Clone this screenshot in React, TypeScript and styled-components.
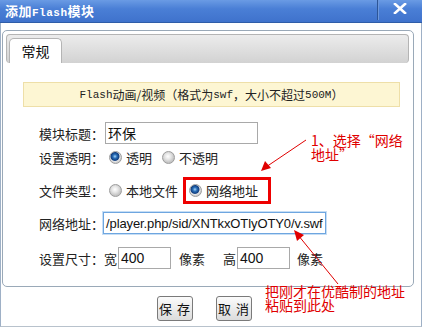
import styled, { createGlobalStyle } from "styled-components";

const GlobalStyle = createGlobalStyle`
  body {
    margin: 0;
    font-family: "Noto Sans CJK SC", "Liberation Sans", sans-serif;
    background: #fff;
  }
`;

const Window = styled.div`
  position: relative;
  width: 422px;
  height: 327px;
  box-sizing: border-box;
  display: flex;
  flex-direction: column;
  overflow: hidden;
  background: #fff;
`;

const TitleBar = styled.div`
  height: 23px;
  box-sizing: border-box;
  display: flex;
  align-items: flex-start;
  justify-content: space-between;
  background: linear-gradient(#6a9be4, #4a7fd6 40%, #3f72cc);
  border-bottom: 1px solid #2f5da8;
`;

const TitleText = styled.div`
  padding: 3px 0 0 5px;
  color: #fff;
  font-weight: bold;
  font-size: 13px;
  line-height: 16px;
  letter-spacing: 0.5px;
`;

const TitleLatin = styled.span`
  font-family: "Liberation Mono", monospace;
  font-size: 11px;
`;

const CloseArea = styled.div`
  width: 44px;
  height: 17px;
  display: flex;
  justify-content: center;
  padding-top: 3px;
  border-left: 1px solid #2d5596;
  box-shadow: inset 1px 0 0 #6d98dc;
`;

const Body = styled.div`
  flex: 1;
  display: flex;
  flex-direction: column;
  border-left: 1px solid #9eb0c6;
  border-right: 1px solid #9eb0c6;
  border-bottom: 1px solid #b8c2cc;
  padding: 7px 7px 0 1px;
`;

const Panel = styled.div`
  height: 257px;
  box-sizing: border-box;
  border: 1px solid #9aa9b8;
  border-radius: 5px;
  padding: 3px 3px 0 3px;
`;

const TabStrip = styled.div`
  height: 29px;
  box-sizing: border-box;
  display: flex;
  align-items: flex-end;
  padding-left: 2px;
  border: 1px solid #b4b4b4;
  border-bottom: none;
  border-radius: 4px;
  background: linear-gradient(#ececec, #d2d2d2);
  width: 403px;
`;

const Tab = styled.div`
  width: 53px;
  height: 25px;
  box-sizing: border-box;
  background: #fff;
  border: 1px solid #b4b4b4;
  border-bottom: none;
  border-radius: 5px 5px 0 0;
  font-size: 14px;
  color: #111;
  display: flex;
  align-items: center;
  justify-content: center;
`;

const Notice = styled.div`
  margin: 19px 0 0 17px;
  width: 377px;
  height: 25px;
  box-sizing: border-box;
  background: #fdf6d3;
  border: 1px solid #eedfa8;
  display: flex;
  align-items: center;
  justify-content: center;
  font-size: 12px;
  color: #222;
`;

const Mono = styled.span`
  font-family: "Liberation Mono", monospace;
  font-size: 11px;
`;

const Row = styled.div<{ $top: number; $h: number }>`
  display: flex;
  align-items: center;
  margin-top: ${(p) => p.$top}px;
  height: ${(p) => p.$h}px;
  font-size: 13px;
  color: #222;
`;

const Label = styled.div`
  width: 98px;
  text-align: right;
  white-space: nowrap;
`;

const TextInput = styled.div<{ $w: number; $focus?: boolean }>`
  width: ${(p) => p.$w}px;
  height: 22px;
  box-sizing: border-box;
  margin-left: ${(p) => (p.$focus ? -1 : 1)}px;
  border: 1px solid ${(p) => (p.$focus ? "#6ea6e0" : "#a9a9a9")};
  box-shadow: ${(p) => (p.$focus ? "0 0 0 1px #c6def5" : "none")};
  padding: 0 2px;
  display: flex;
  align-items: center;
  overflow: hidden;
  white-space: nowrap;
  font-size: 14px;
  color: #111;
`;

const UrlText = styled.span`
  font-family: "Liberation Sans", Arial, sans-serif;
  font-size: 13px;
  letter-spacing: -0.1px;
`;

const Caret = styled.span`
  display: inline-block;
  width: 1px;
  height: 15px;
  background: #000;
  margin-left: 1px;
`;

const NumText = styled.span`
  font-family: "Liberation Sans", Arial, sans-serif;
  font-size: 14px;
`;

const Option = styled.div<{ $boxed?: boolean; $ml: number }>`
  display: flex;
  align-items: center;
  gap: 4px;
  margin-left: ${(p) => p.$ml}px;
  ${(p) =>
    p.$boxed &&
    `
    border: 3px solid #ee0000;
    height: 27px;
    box-sizing: border-box;
    padding: 0 10px 0 3px;
  `}
`;

const Radio = styled.span<{ $on?: boolean }>`
  width: 13px;
  height: 13px;
  box-sizing: border-box;
  border-radius: 50%;
  border: 1px solid #9c9c9c;
  background: ${(p) =>
    p.$on
      ? "radial-gradient(circle at 45% 40%, #a8d6fa 0, #2a6fb8 2px, #123f80 4px, #e8e8e8 5px, #cfcfcf 6px)"
      : "radial-gradient(circle at 45% 40%, #ffffff 0, #e6e6e6 3px, #c4c4c4 6px)"};
`;

const Unit = styled.span<{ $ml: number }>`
  margin-left: ${(p) => p.$ml}px;
`;

const ButtonBar = styled.div`
  display: flex;
  justify-content: center;
  gap: 23px;
  padding: 9px 7px 0 0;
`;

const Button = styled.button`
  width: 36px;
  height: 25px;
  padding: 0;
  border: 1px solid #7a7a7a;
  border-radius: 3px;
  background: linear-gradient(#fbfbfb, #dcdcdc);
  font-family: "Noto Sans CJK SC", sans-serif;
  font-size: 13px;
  letter-spacing: 1px;
  color: #111;
  white-space: nowrap;
`;

const Note = styled.div<{ $x: number; $y: number }>`
  position: absolute;
  left: ${(p) => p.$x}px;
  top: ${(p) => p.$y}px;
  color: #e00000;
  font-size: 14px;
  line-height: 14px;
  white-space: nowrap;
`;

const Arrows = styled.svg`
  position: absolute;
  left: 0;
  top: 0;
  pointer-events: none;
`;

const App: React.FC = () => {
  return (
    <>
      <GlobalStyle />
      <Window>
        <TitleBar>
          <TitleText>
            添加<TitleLatin>Flash</TitleLatin>模块
          </TitleText>
          <CloseArea>
            <svg width="14" height="11" viewBox="0 0 14 11">
              <path
                d="M2 1 L12 10 M12 1 L2 10"
                stroke="#fff"
                strokeWidth="2.6"
                strokeLinecap="square"
              />
            </svg>
          </CloseArea>
        </TitleBar>
        <Body>
          <Panel>
            <TabStrip>
              <Tab>常规</Tab>
            </TabStrip>
            <Notice>
              <Mono>Flash</Mono>动画/视频（格式为<Mono>swf</Mono>，大小不超过
              <Mono>500M</Mono>）
            </Notice>
            <Row $top={15} $h={22}>
              <Label>模块标题：</Label>
              <TextInput $w={153}>环保</TextInput>
            </Row>
            <Row $top={2} $h={22}>
              <Label>设置透明：</Label>
              <Option $ml={5}>
                <Radio $on />
                透明
              </Option>
              <Option $ml={10}>
                <Radio />
                不透明
              </Option>
            </Row>
            <Row $top={9} $h={27}>
              <Label>文件类型：</Label>
              <Option $ml={5}>
                <Radio />
                本地文件
              </Option>
              <Option $ml={5} $boxed>
                <Radio $on />
                网络地址
              </Option>
            </Row>
            <Row $top={8} $h={22}>
              <Label>网络地址：</Label>
              <TextInput $w={223} $focus>
                <UrlText>/player.php/sid/XNTkxOTlyOTY0/v.swf</UrlText>
                <Caret />
              </TextInput>
            </Row>
            <Row $top={13} $h={22}>
              <Label>设置尺寸：</Label>
              <span>宽</span>
              <TextInput $w={53}>
                <NumText>400</NumText>
              </TextInput>
              <Unit $ml={8}>像素</Unit>
              <Unit $ml={18}>高</Unit>
              <TextInput $w={53}>
                <NumText>400</NumText>
              </TextInput>
              <Unit $ml={7}>像素</Unit>
            </Row>
          </Panel>
          <ButtonBar>
            <Button>保 存</Button>
            <Button>取 消</Button>
          </ButtonBar>
        </Body>

        <Note $x={311} $y={133}>
          1、选择“网络
          <br />
          地址”
        </Note>
        <Note $x={265} $y={284}>
          把刚才在优酷制的地址
          <br />
          粘贴到此处
        </Note>
        <Arrows width="422" height="327" viewBox="0 0 422 327">
          <line x1="306" y1="140" x2="266" y2="167" stroke="#e00000" strokeWidth="1" />
          <polygon points="261,171 265,161 271,168" fill="#e00000" />
          <line x1="338" y1="284" x2="298" y2="235" stroke="#e00000" strokeWidth="1" />
          <polygon points="294,230 304,235 297,241" fill="#e00000" />
        </Arrows>
      </Window>
    </>
  );
};

export default App;
